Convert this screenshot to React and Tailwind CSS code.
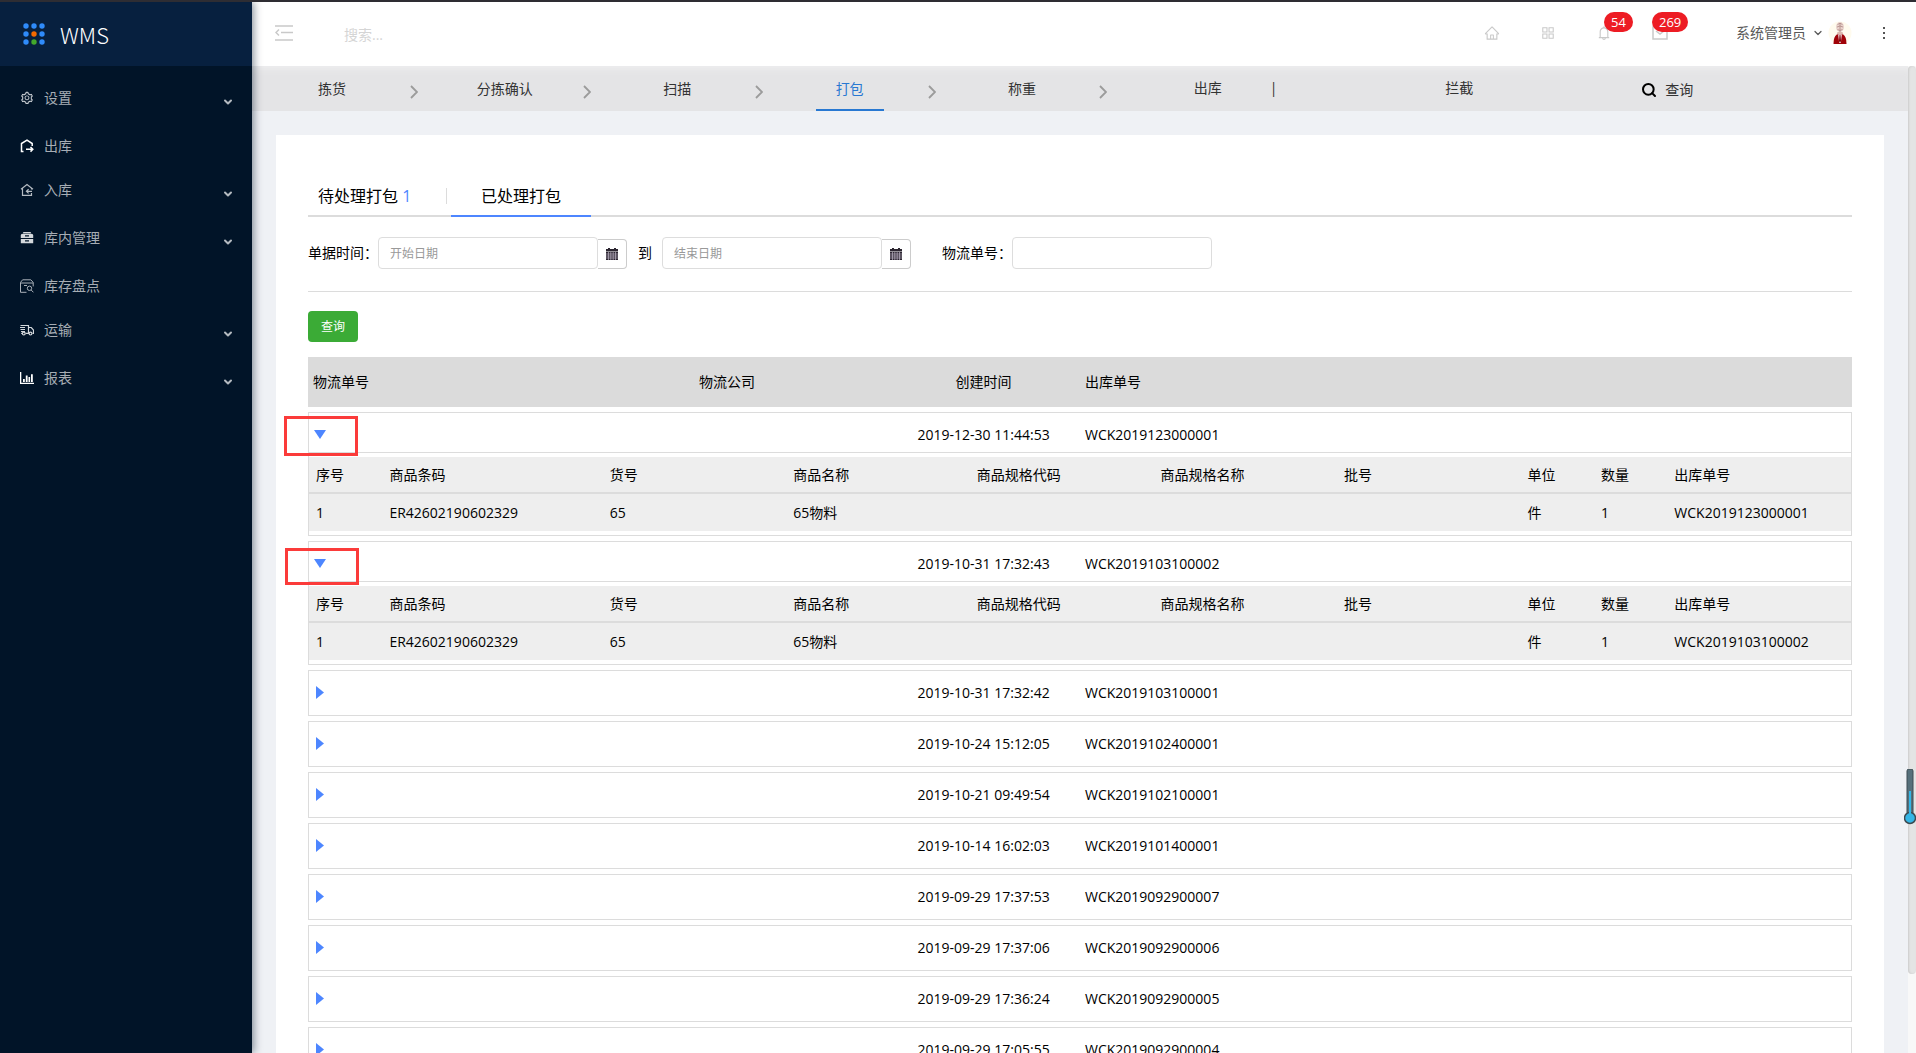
import React, { useState } from 'react'
import { AiOutlineAppstore, AiOutlineBell, AiOutlineHome, AiOutlineSetting } from 'react-icons/ai'
import { ChevronDown, Search } from 'lucide-react'

const MENU = [
  { name: '设置', icon: SettingIcon, sub: true },
  { name: '出库', icon: OutIcon },
  { name: '入库', icon: InIcon, sub: true },
  { name: '库内管理', icon: DrawerIcon, sub: true },
  { name: '库存盘点', icon: CheckIcon },
  { name: '运输', icon: TruckIcon, sub: true },
  { name: '报表', icon: ChartIcon, sub: true },
]

const STEPS = ['拣货', '分拣确认', '扫描', '打包', '称重']

const DETAIL_COLS = [
  ['序号', 'w-1/21'],
  ['商品条码', 'w-1/7'],
  ['货号', 'w-5/42'],
  ['商品名称', 'w-5/42'],
  ['商品规格代码', 'w-5/42'],
  ['商品规格名称', 'w-5/42'],
  ['批号', 'w-5/42'],
  ['单位', 'w-1/21'],
  ['数量', 'w-1/21'],
  ['出库单号', 'w-5/42'],
]

const ORDERS = [
  { time: '2019-12-30 11:44:53', no: 'WCK2019123000001', mark: 'top-[3px] -left-[25px] h-10' },
  { time: '2019-10-31 17:32:43', no: 'WCK2019103100002', mark: 'top-[6px] -left-6 h-[37px]' },
  { time: '2019-10-31 17:32:42', no: 'WCK2019103100001' },
  { time: '2019-10-24 15:12:05', no: 'WCK2019102400001' },
  { time: '2019-10-21 09:49:54', no: 'WCK2019102100001' },
  { time: '2019-10-14 16:02:03', no: 'WCK2019101400001' },
  { time: '2019-09-29 17:37:53', no: 'WCK2019092900007' },
  { time: '2019-09-29 17:37:06', no: 'WCK2019092900006' },
  { time: '2019-09-29 17:36:24', no: 'WCK2019092900005' },
  { time: '2019-09-29 17:05:55', no: 'WCK2019092900004' },
]

function SettingIcon(){
  return <AiOutlineSetting className="size-3.5 text-[#d3d7db]" />
}

function OutIcon(){
  return (
    <svg viewBox="0 0 14 14" className="size-3.5" fill="none" stroke="#fff" strokeWidth="1.5">
      <path d="M3.5 12.5H1.5V4.5L7 1.2l5.2 3.3V7" />
      <path d="M6 10.3h6.5M10.5 8l2.3 2.3-2.3 2.3" />
    </svg>
  )
}

function InIcon(){
  return (
    <svg viewBox="0 0 14 14" className="size-3.5" fill="none" stroke="#b5bbc2" strokeWidth="1.2">
      <path d="M1 6.2 7 1.6l6 4.6M2.5 5.5v6.9h9V10M11.5 5.5v1" />
      <path d="M12 8.3H6.5M8.6 6.2 6.4 8.3l2.2 2.1" />
    </svg>
  )
}

function DrawerIcon(){
  return (
    <svg viewBox="0 0 14 14" className="size-3.5" fill="#d4d8dc">
      <path d="M3.5 1h7l1 1.5h-9zM1.5 3h11l.7 1v3H.8V4zM.8 8h12.4v4.2H.8z" />
      <path d="M5 4.8h4M5 9.8h4" stroke="#011428" strokeWidth="1.2" />
    </svg>
  )
}

function CheckIcon(){
  return (
    <svg viewBox="0 0 14 14" className="size-3.5" fill="none" stroke="#aab0b8" strokeWidth="1">
      <path d="M6.5 13.3h-6V3.4L2.6.8h8.2l2.4 2.6v4M.5 4h12.7M4 6.5h3" />
      <circle cx="9.5" cy="9.3" r="2.2" />
      <path d="m11.2 11 2.2 2.3" />
    </svg>
  )
}

function TruckIcon(){
  return (
    <svg viewBox="0 0 14 14" className="size-3.5" fill="none" stroke="#d3d7db" strokeWidth="1.2">
      <path d="M.5 2.500h8v7.800H5.800M8.500 4.500h2.800l2.200 2.600v3.200h-1M1.800 10.300H1" />
      <path d="M0 4.500h5M.5 6.500h4.500M1 8.500h4" />
      <circle cx="3.800" cy="10.600" r="1.400" />
      <circle cx="10.500" cy="10.600" r="1.400" />
    </svg>
  )
}

function ChartIcon(){
  return (
    <svg viewBox="0 0 14 14" className="size-3.5" fill="#fff">
      <path d="M0 1h1.3v10.7H14V13H0zM3 8h1.8v3H3zM5.8 4.5h1.8V11H5.8zM8.5 6h1.6v5H8.5zM11 3.2h1.8V11H11z" />
    </svg>
  )
}

function Logo(){
  const dots = [0, 1, 2, 3, 4, 5, 6, 7, 8]
  return (
    <svg viewBox="0 0 22 22" className="size-[22px]">
      {dots.map(i => (
        <circle
          key={i}
          cx={3 + (i % 3) * 8}
          cy={3 + Math.floor(i / 3) * 8}
          r="2.7"
          fill={i === 4 ? '#f56a00' : i === 7 ? '#43a82c' : '#2f8bfa'}
        />
      ))}
    </svg>
  )
}

function CalendarIcon(){
  return (
    <svg viewBox="0 0 12 12" className="size-3" fill="#2b2530">
      <path d="M0 1h2V0h2v1h4V0h2v1h2v2.4H0z" />
      <path d="M0 4h12v8H0z" />
      <path d="M0 6h12M0 8h12M0 10h12M2.5 4v8M4.8 4v8M7.2 4v8M9.5 4v8" stroke="#cfc4d6" strokeWidth=".6" />
    </svg>
  )
}

function Avatar(){
  return (
    <svg viewBox="0 0 24 24" className="size-6">
      <circle cx="12" cy="12" r="11.5" fill="#fffbee" />
      <ellipse cx="12" cy="6" rx="4" ry="5" fill="#e9d3cc" />
      <path d="M9.5 3.5q2.5-2.5 5 0M9 6q3-2 6 0M9.5 8.5q2.5 2 5 0M12 2v9" stroke="#b08a86" strokeWidth=".8" fill="none" />
      <path d="M9.5 11h5l1 3h-7z" fill="#dcb8ae" />
      <path d="M5.500 23q0-8 3.500-9.500h6q3.500 1.500 3.500 9.500z" fill="#a00208" />
      <path d="M10.200 13.500h3.600L12.800 22h-1.600z" fill="#fff" />
      <path d="M11.500 14h1l.5 6-1 2-1-2z" fill="#7c0207" />
    </svg>
  )
}

function Sidebar(){
  return (
    <aside className="z-10 w-[252px] shrink-0 bg-[#011428] shadow-[2px_0_8px_rgba(0,21,41,0.45)]">
      <a href="#" className="flex h-16 items-center gap-[15px] bg-[#07203f] pl-[23px]">
        <Logo />
        <span className="pt-0.5 font-['Noto_Sans_CJK_SC',sans-serif] text-[22px] font-light text-white">WMS</span>
      </a>
      <nav className="pt-2.5">
        {MENU.map(m => (
          <a key={m.name} href="#" className={`flex h-11 items-center pr-[18px] pl-5 text-[#a6adb4] ${m.sub ? 'mb-1' : ''}`}>
            <m.icon />
            <span className="ml-2.5 flex-1">{m.name}</span>
            {m.sub && <ChevronDown className="mt-2 size-3 text-[#b4bac0]" strokeWidth={4} />}
          </a>
        ))}
      </nav>
    </aside>
  )
}

function Header(){
  return (
    <header className="flex h-16 shrink-0 items-center bg-white pr-[30px] pb-0.5 pl-[23px]">
      <button aria-label="收起菜单" className="size-[18px]">
        <svg viewBox="0 0 18 18" className="size-[18px]" fill="none" stroke="#c9c9c9" strokeWidth="1.5">
          <path d="M0 2h18M6 8.500h12M0 16h18M4 5.500 1 8.500l3 3" />
        </svg>
      </button>
      <input type="text" aria-label="搜索" placeholder="搜索..." className="ml-[51px] h-8 min-w-0 flex-1 pt-0.5 outline-none placeholder:text-[#d5d5d5]" />
      <div className="flex items-center gap-10 text-[#c9c9c9]">
        <button aria-label="首页"><AiOutlineHome className="size-4" /></button>
        <button aria-label="应用"><AiOutlineAppstore className="size-4" /></button>
        <button aria-label="通知" className="relative">
          <AiOutlineBell className="size-4" />
          <span className="absolute -top-[13px] left-2 h-5 rounded-full bg-[#ed1c24] px-[7px] text-[13px] leading-5 text-white">54</span>
        </button>
        <button aria-label="消息" className="relative">
          <svg viewBox="0 0 16 16" className="size-4" fill="none" stroke="currentColor" strokeWidth="1.5">
            <path d="M1 2h14v12H1zM4 6l4 3 4-3" />
          </svg>
          <span className="absolute -top-[13px] left-0 h-5 rounded-full bg-[#ed1c24] px-[7px] text-[13px] leading-5 text-white">269</span>
        </button>
      </div>
      <button className="ml-[68px] flex items-center text-[#595959]">
        系统管理员
        <ChevronDown className="mr-1 ml-1.5 size-3" strokeWidth={2.5} />
        <Avatar />
      </button>
      <button aria-label="更多" className="ml-[30px]">
        <svg viewBox="0 0 4 14" className="h-3.5 w-1" fill="#555">
          <path d="M1 1h2v2H1zM1 6h2v2H1zM1 11h2v2H1z" />
        </svg>
      </button>
    </header>
  )
}

function StepBar(){
  return (
    <nav className="grid h-[45px] grid-cols-[173fr_173fr_172fr_173fr_172fr_161fr_364fr_267fr] bg-[#e4e4e6] pl-0.5 text-[#333] shadow-[inset_0_8px_8px_-6px_#f0f0f1]">
      {STEPS.map(s => (
        <div key={s} className="flex items-center">
          <div className="flex flex-1 justify-center">
            <a href="#" className={`flex h-11 items-center border-b-2 px-5 pt-0.5 ${s === '打包' ? 'border-[#2878d2] text-[#2878d2]' : 'border-transparent'}`}>{s}</a>
          </div>
          <svg viewBox="0 0 8 14" className="mt-1.5 mr-[9px] h-3.5 w-2" fill="none" stroke="#9b9b9b" strokeWidth="1.8">
            <path d="M1 1l6 6-6 6" />
          </svg>
        </div>
      ))}
      <div className="flex items-center justify-end gap-12 pb-0.5"><a href="#">出库</a><span>|</span></div>
      <div className="flex items-center justify-center pb-0.5"><a href="#">拦截</a></div>
      <a href="#" className="flex items-center gap-2 pt-0.5"><Search className="size-4 text-black" strokeWidth={3} />查询</a>
    </nav>
  )
}

function DateInput({ id, label, placeholder }){
  return (
    <div className="flex items-end">
      <input id={id} type="text" aria-label={label} placeholder={placeholder} className="h-8 w-[220px] rounded border border-[#ddd] px-[11px] text-xs outline-none placeholder:text-[#999]" />
      <button aria-label="选择日期" className="flex h-[30px] w-[29px] items-center justify-center rounded-r border border-l-0 border-[#ccc]"><CalendarIcon /></button>
    </div>
  )
}

function Detail({ no }){
  const cells = ['1', 'ER42602190602329', '65', '65物料', '', '', '', '件', '1', no]
  return (
    <table className="w-full table-fixed bg-[#eee]">
      <thead>
        <tr className="h-9">
          {DETAIL_COLS.map(([name, w]) => <th key={name} className={`${w} px-[7px] text-left font-normal`}>{name}</th>)}
        </tr>
      </thead>
      <tbody>
        <tr className="h-[38px] border-t-2 border-[#dcdcdc]">
          {cells.map((c, i) => <td key={i} className="px-[7px]">{c}</td>)}
        </tr>
      </tbody>
    </table>
  )
}

function OrderRow({ order, open, onToggle }){
  return (
    <tbody className="relative mt-[5px] block border border-[#dcdcdc]">
      <tr className={`grid grid-cols-[2fr_1fr_1fr_4fr] items-center ${open ? 'h-10 border-b border-[#dcdcdc] pt-[5px]' : 'h-11'}`}>
        <td className="flex pl-[5px]">
          <button onClick={onToggle} aria-label="展开" aria-expanded={open} className="size-3.5">
            <svg viewBox="0 0 14 14" className="size-3.5" fill="#4d86ff">
              <path d={open ? 'M0 2h12L6 11z' : 'M2 0l8 6.5L2 13z'} />
            </svg>
          </button>
        </td>
        <td></td>
        <td className="text-center whitespace-nowrap">{order.time}</td>
        <td className="pl-[5px]">{order.no}</td>
      </tr>
      {open && (
        <tr className="block">
          <td className="block py-1"><Detail no={order.no} /></td>
        </tr>
      )}
      {order.mark && <tr aria-hidden="true" className={`pointer-events-none absolute block w-[74px] border-[3px] border-[#fb3b3a] ${order.mark}`} />}
    </tbody>
  )
}

export default function App(){
  const [openRows, setOpenRows] = useState([0, 1])

  const toggle = (i) => {
    setOpenRows(openRows.includes(i) ? openRows.filter(r => r !== i) : [...openRows, i])
  }

  return (
    <div className="flex h-screen overflow-hidden border-t-2 border-[#2e2d33] font-['Open_Sans','Noto_Sans_CJK_SC',sans-serif] text-sm text-black">
      <Sidebar />
      <div className="flex min-w-0 flex-1 flex-col">
        <Header />
        <div className="relative flex min-h-0 flex-1">
          <div className="min-w-0 flex-1 overflow-hidden bg-[#eff1f5]">
            <StepBar />
            <main className="m-6 bg-white px-8 pt-[42px]">
              <div role="tablist" className="flex h-10 items-center border-b-2 border-[#dcdcdc] text-base">
                <button role="tab" className="w-[138px] pl-2.5 text-left">待处理打包 <span className="text-[#4d86ff]">1</span></button>
                <span className="mr-1 h-4 w-px bg-[#dcdcdc]" />
                <button role="tab" aria-selected="true" className="-mb-0.5 h-10 border-b-2 border-[#4d86ff] px-[30px]">已处理打包</button>
              </div>

              <form className="flex items-center border-b border-[#dcdcdc] pt-5 pb-[22px]" onSubmit={e => e.preventDefault()}>
                <label htmlFor="start">单据时间：</label>
                <DateInput id="start" label="开始日期" placeholder="开始日期" />
                <span className="mr-2.5 ml-[11px]">到</span>
                <DateInput id="end" label="结束日期" placeholder="结束日期" />
                <label htmlFor="shipNo" className="ml-[31px]">物流单号：</label>
                <input id="shipNo" type="text" className="h-8 w-[200px] rounded border border-[#ddd] px-[11px] text-xs outline-none" />
              </form>

              <button className="mt-[19px] block h-[31px] rounded bg-[#3bab36] px-[13px] text-xs text-white">查询</button>

              <table className="mt-[15px] block">
                <thead className="block bg-[#dbdbdb]">
                  <tr className="grid h-[50px] grid-cols-[2fr_1fr_1fr_4fr] items-center">
                    <th className="pl-[5px] text-left font-normal">物流单号</th>
                    <th className="pl-[5px] text-left font-normal">物流公司</th>
                    <th className="text-center font-normal">创建时间</th>
                    <th className="pl-[5px] text-left font-normal">出库单号</th>
                  </tr>
                </thead>
                {ORDERS.map((o, i) => (
                  <OrderRow key={o.no} order={o} open={openRows.includes(i)} onToggle={() => toggle(i)} />
                ))}
              </table>
            </main>
          </div>
          <div className="w-2 shrink-0 bg-[#f8f8f8]">
            <div className="h-[92%] rounded-full bg-[#e4e4e4] shadow-[inset_1px_0_2px_#ccc]" />
          </div>
          {/* floating gauge on the scrollbar */}
          <svg viewBox="0 0 12 56" className="absolute top-[703px] right-0 h-14 w-3">
            <rect x="3" y="0" width="6" height="48" rx="2" fill="#56707b" stroke="#3d4b52" />
            <circle cx="6" cy="49" r="5.5" fill="#35b6e6" stroke="#3d4b52" strokeWidth="1.5" />
            <path d="M5 22h2v24H5z" fill="#35b6e6" />
          </svg>
        </div>
      </div>
    </div>
  )
}
